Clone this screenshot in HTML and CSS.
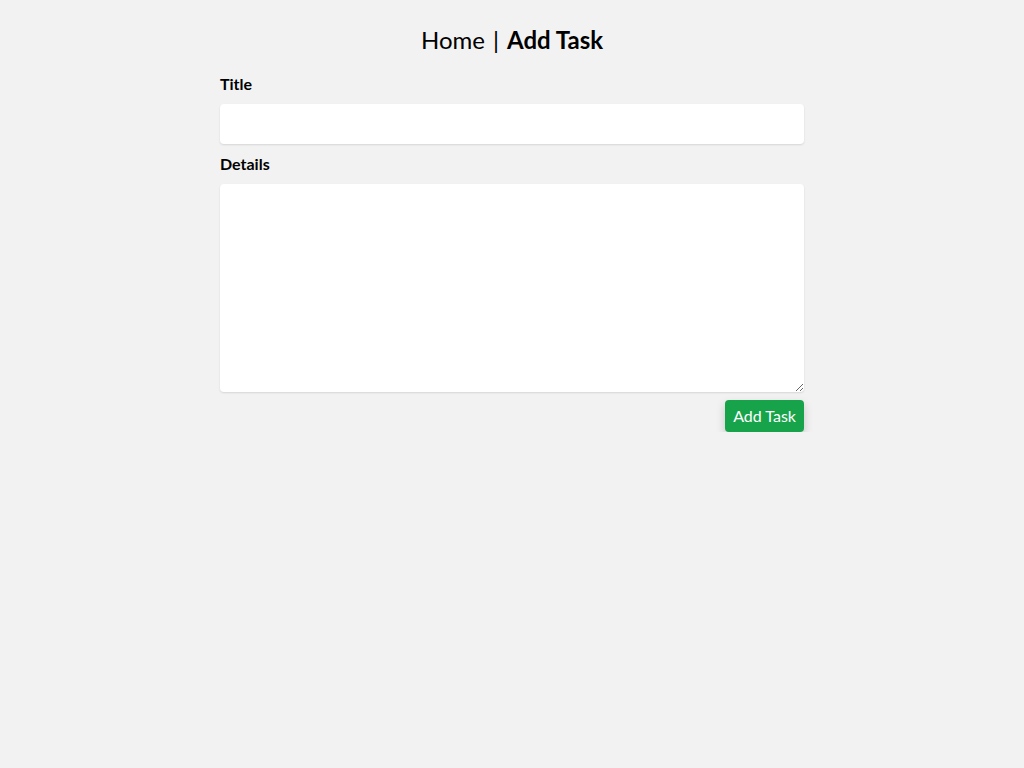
FILE: index.html
```html
<!DOCTYPE html>
<html>
<head>
<meta charset="utf-8">
<link rel="stylesheet" href="styles.css">
</head>
<body>
<div class="page">
  <h1 class="heading"><span class="home">Home</span><span class="sep">|</span><span class="current">Add Task</span></h1>
  <form class="form">
    <label class="label">Title</label>
    <input class="input" type="text">
    <label class="label">Details</label>
    <textarea class="textarea"></textarea>
    <div class="actions"><button class="btn" type="button">Add Task</button></div>
  </form>
</div>
</body>
</html>
```
FILE: styles.css
```css
html, body { margin: 0; padding: 0; }
body {
  background: #f2f2f2;
  font-family: Lato, "Open Sans", sans-serif;
  color: #000;
}
.page {
  width: 584px;
  margin: 0 auto;
  padding-top: 24px;
}
.heading {
  margin: 0;
  text-align: center;
  font-size: 24px;
  line-height: 32px;
  font-weight: 400;
}
.heading .sep { margin: 0 8px; }
.heading .current { font-weight: 700; }
.form {
  display: flex;
  flex-direction: column;
  margin-top: 18px;
}
.label {
  font-size: 16px;
  font-weight: 700;
  line-height: 20px;
  margin-bottom: 10px;
}
.input, .textarea {
  box-sizing: border-box;
  width: 100%;
  border: none;
  border-radius: 4px;
  background: #fff;
  box-shadow: 0 1px 2px rgba(0,0,0,0.12);
  font-family: inherit;
  font-size: 16px;
  margin: 0 0 10px 0;
  padding: 8px;
  outline: none;
}
.input { height: 40px; }
.textarea { height: 208px; resize: vertical; display: block; margin-bottom: 8px; }
.actions { display: flex; justify-content: flex-end; }
.btn {
  background: #16a34a;
  color: #fff;
  border: none;
  border-radius: 4px;
  height: 32px;
  padding: 0 8px 1px;
  font-family: inherit;
  font-size: 16px;
  box-shadow: 0 4px 10px rgba(0,0,0,0.18);
}
```
